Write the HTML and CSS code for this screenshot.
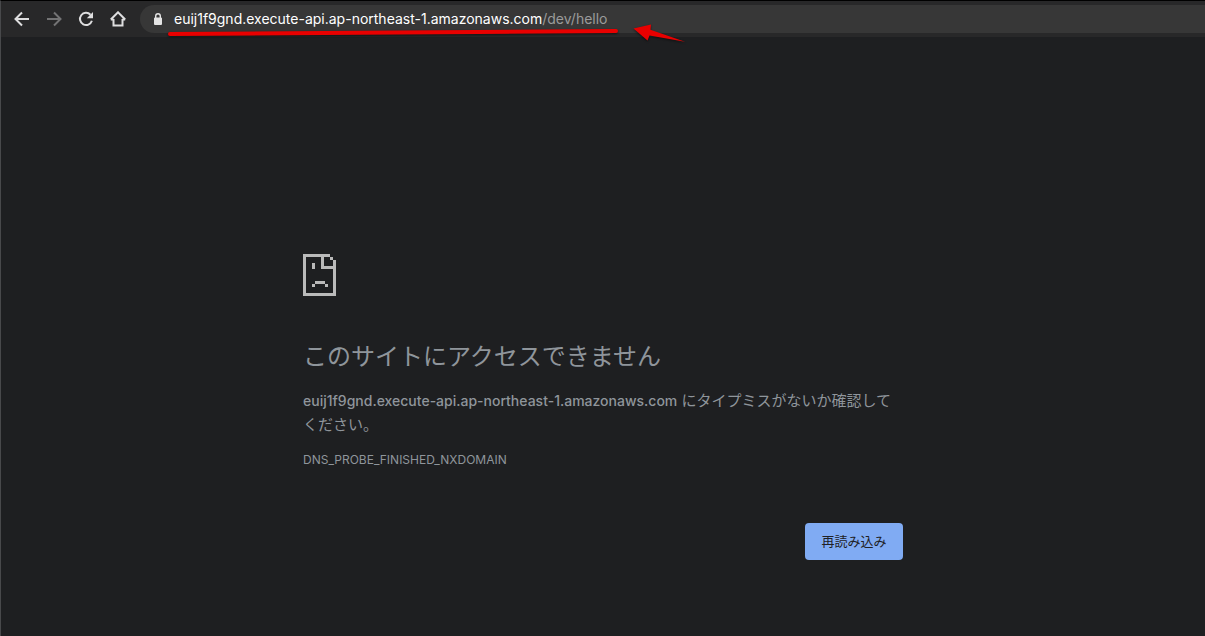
FILE: index.html
```html
<!DOCTYPE html>
<html lang="ja">
<head>
<meta charset="utf-8">
<meta name="viewport" content="width=device-width, initial-scale=1">
<title>euij1f9gnd.execute-api.ap-northeast-1.amazonaws.com</title>
<link rel="stylesheet" href="styles.css">
</head>
<body>
<div class="browser">
  <header class="toolbar">
    <nav class="nav">
      <button class="nav-button" type="button" aria-label="戻る">
        <svg viewBox="0 0 16 16" width="16" height="16"><path d="M15 8H2M8 1.5 1.5 8 8 14.5"/></svg>
      </button>
      <button class="nav-button nav-button-off" type="button" aria-label="進む" disabled>
        <svg viewBox="0 0 16 16" width="16" height="16"><path d="M1 8h13M8 1.5 14.5 8 8 14.5"/></svg>
      </button>
      <button class="nav-button" type="button" aria-label="再読み込み">
        <svg viewBox="0 0 16 16" width="16" height="16"><path d="M13.9 9.8A6.100 6.100 0 1 1 12.5 3.700"/><path class="solid" d="M15 1v6.200H8.800z"/></svg>
      </button>
      <button class="nav-button" type="button" aria-label="ホーム">
        <svg viewBox="0 0 16 16" width="16" height="16"><path d="M3.500 8v6.500h9V8M.8 8.500 8 1.300l7.200 7.200M.8 8.500h2.700M12.500 8.500h2.700"/></svg>
      </button>
    </nav>
    <div class="address">
      <svg class="lock" viewBox="0 0 10 12" width="10" height="12" aria-hidden="true"><path class="lock-body" d="M2 4.500h6a1 1 0 0 1 1 1V11a1 1 0 0 1-1 1H2a1 1 0 0 1-1-1V5.500a1 1 0 0 1 1-1z"/><path class="lock-bow" d="M2.700 5V3a2.300 2.300 0 0 1 4.600 0v2"/></svg>
      <div class="url" role="textbox" contenteditable="true" spellcheck="false" aria-label="アドレス"><span class="host">euij1f9gnd.execute-api.ap-northeast-1.amazonaws.com</span>/dev/hello</div>
    </div>
    <svg class="marks" viewBox="0 0 520 24" width="520" height="24" aria-hidden="true">
      <path class="underline" d="M4 11 450 8"/>
      <path class="arrow" d="M467.500 5.500 485 1.500 484.500 6.800 519 18.800 483.500 12.500 481.500 17.500z"/>
    </svg>
  </header>
  <main class="page">
    <section class="error">
      <svg class="sad-page" viewBox="0 0 33 42" width="33" height="42" aria-hidden="true">
        <path fill-rule="evenodd" d="M0 0h27v3h3v3h3v36H0zM3 3v36h27V15H18V3zM21 3v9h9V6h-3V3z"/>
        <path d="M9 9h3v6H9zM12 27h10v3H12zM9 30h3v3H9zM22 30h3v3h-3z"/>
      </svg>
      <h1 class="title">このサイトにアクセスできません</h1>
      <p class="message"><span class="message-host">euij1f9gnd.execute-api.ap-northeast-1.amazonaws.com</span> にタイプミスがないか確認して<span class="phrase">ください。</span></p>
      <p class="code">DNS_PROBE_FINISHED_NXDOMAIN</p>
      <div class="actions"><button class="reload" type="button">再読み込み</button></div>
    </section>
  </main>
</div>
</body>
</html>
```
FILE: styles.css
```css
* {
  box-sizing: border-box;
}

body {
  margin: 0;
  background: #1e1f21;
  color: #8f959b;
  font-family: Inter, "Noto Sans CJK JP", sans-serif;
}

.browser {
  min-height: 100vh;
  border-top: 1px solid #000;
  border-left: 1px solid #48494b;
}

.toolbar {
  position: relative;
  display: flex;
  align-items: center;
  height: 36px;
  padding-left: 13px;
  background: #282829;
}

.nav {
  display: flex;
  gap: 16px;
  margin-right: 14px;
}

.nav-button {
  display: flex;
  padding: 0;
  border: 0;
  background: none;
  color: #dededf;
}

.nav-button-off {
  color: #737374;
}

.nav-button svg {
  fill: none;
  stroke: currentColor;
  stroke-width: 2;
}

.nav-button .solid {
  fill: currentColor;
  stroke: none;
}

.address {
  display: flex;
  flex: 1;
  align-items: center;
  gap: 11px;
  height: 28px;
  padding-left: 13px;
  border-radius: 14px 0 0 14px;
  background: #373737;
}

.lock-body {
  fill: #e4e4e4;
}

.lock-bow {
  fill: none;
  stroke: #e4e4e4;
  stroke-width: 1.4;
}

.url {
  color: #9b9b9b;
  font-size: 14px;
  line-height: 20px;
  white-space: nowrap;
  outline: 0;
}

.host {
  color: #fff;
}

.marks {
  position: absolute;
  top: 22px;
  left: 165px;
  filter: drop-shadow(0 1px 1px #0008);
  pointer-events: none;
}

.underline {
  fill: none;
  stroke: #e90000;
  stroke-width: 4;
  stroke-linecap: round;
}

.arrow {
  fill: #e90000;
}

.error {
  max-width: 600px;
  margin: 0 auto;
  padding-top: 217px;
}

.sad-page {
  display: block;
  fill: #bababa;
}

.title {
  margin: 43px 0 14px;
  font-size: 24px;
  font-weight: 400;
  line-height: 36px;
}

.message {
  margin: 0;
  font-size: 15px;
  line-height: 24px;
}

.message-host {
  font-size: 14px;
  font-weight: 500;
}

.phrase {
  display: inline-block;
}

.code {
  margin: 11px 0 0;
  font-size: 12px;
  line-height: 24px;
}

.actions {
  display: flex;
  justify-content: flex-end;
  margin-top: 51px;
}

.reload {
  min-width: 98px;
  height: 37px;
  padding: 0 16px 3px;
  border: 0;
  border-radius: 4px;
  background: #80abf3;
  color: #202124;
  font-family: inherit;
  font-size: 13px;
}
```
